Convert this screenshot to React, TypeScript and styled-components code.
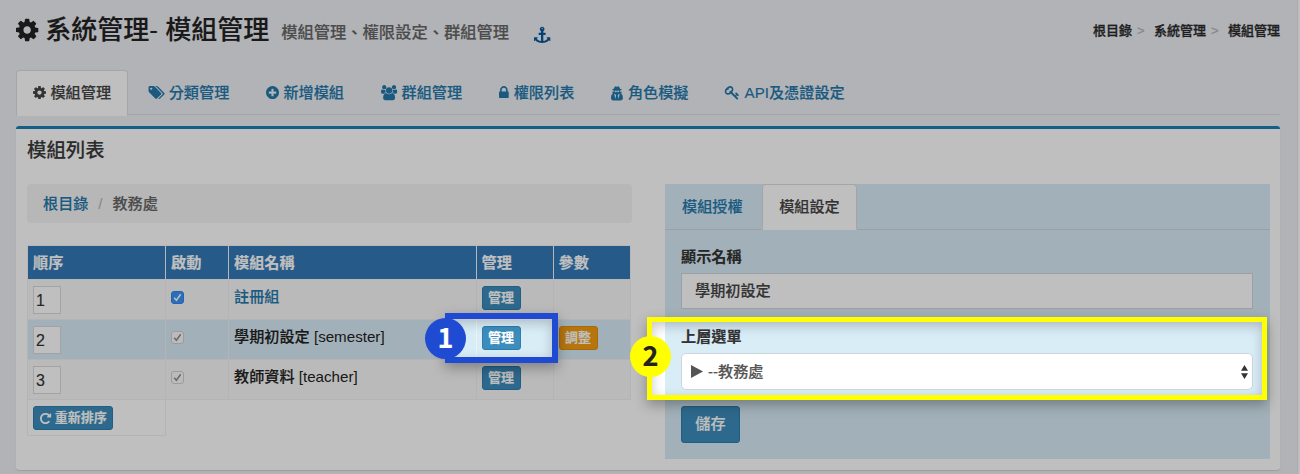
import React from 'react';
import styled, { createGlobalStyle, css } from 'styled-components';

const Global = createGlobalStyle`
  *, *::before, *::after { box-sizing: border-box; }
  html, body { margin: 0; padding: 0; }
  body {
    background: #fff;
    color: #333;
    font-family: "Liberation Sans", "Noto Sans CJK TC", sans-serif;
    font-size: 15.15px;
    font-weight: 500;
    line-height: 22px;
    -webkit-text-stroke: 0.15px currentColor;
    overflow: hidden;
  }
`;

const Page = styled.div`
  position: relative;
  width: 1300px;
  height: 474px;
  overflow: hidden;
`;

const Content = styled.div`
  width: 1298px;
  height: 474px;
  padding: 0 17px 0 16px;
  background: #eceff4;
  border-right: 1px solid #e4e6ea;
`;

const Header = styled.header`
  display: flex;
  justify-content: space-between;
  height: 70px;
`;

const Heading = styled.h1`
  display: flex;
  align-items: center;
  margin: 0;
  height: 60px;
  font-size: 26px;
  font-weight: 500;
  color: #222;
  white-space: pre;
`;

const HeadingText = styled.span`
  margin-left: 7px;
`;

const Subtitle = styled.small`
  margin: 4px 0 0 12px;
  font-size: 16.3px;
  color: #666;
`;

const AnchorLink = styled.a`
  display: flex;
  margin: 8px 0 0 25px;
  color: #07589c;
`;

const Trail = styled.nav`
  display: flex;
  align-items: center;
  height: 62px;
  font-size: 13px;
  color: #2a2a2a;
  -webkit-text-stroke-width: 0.3px;
`;

const TrailSeparator = styled.span`
  width: 22px;
  padding-left: 5px;
  font-size: 13px;
  color: #b5b8bc;
`;

const TabBar = styled.ul<{ $inset?: boolean }>`
  display: flex;
  list-style: none;
  margin: 0;
  padding: 0;
  height: ${p => (p.$inset ? 46 : 45)}px;
  border-bottom: 1px solid ${p => (p.$inset ? '#d2d4da' : '#dbdde1')};
`;

const Tab = styled.li<{ $active?: boolean }>`
  display: flex;
  align-items: center;
  height: 46px;
  margin-right: 2.6px;
  padding: 0 16px;
  border: 1px solid transparent;
  border-radius: 4px 4px 0 0;
  color: #2478ab;
  white-space: nowrap;
  svg { margin-right: 4.5px; }
  ${p =>
    p.$active &&
    css`
      background: #fff;
      color: #444;
      border-color: #dbdce0 #dbdce0 #fff;
    `}
`;

const Card = styled.section`
  display: flex;
  flex-direction: column;
  height: 344px;
  margin-top: 11px;
  padding: 0 10px 0 11px;
  background: #fff;
  border-top: 3px solid #1b7fb5;
  border-radius: 3px;
  box-shadow: 0 1px 1px rgba(0, 0, 0, 0.12);
`;

const CardTitle = styled.h3`
  margin: 0;
  height: 55px;
  font-size: 19.4px;
  font-weight: 500;
  line-height: 42px;
  color: #3a3a3a;
`;

const Columns = styled.div`
  display: flex;
  justify-content: space-between;
  align-items: flex-start;
`;

const LeftColumn = styled.div`
  width: 605px;
`;

const Crumbs = styled.nav`
  display: flex;
  align-items: center;
  height: 39px;
  margin-bottom: 22px;
  padding: 0 16px;
  background: #f5f5f5;
  border-radius: 4px;
  color: #666;
`;

const CrumbSlash = styled.span`
  width: 24px;
  text-align: center;
  color: #b8b8b8;
`;

const Link = styled.a`
  color: #2478ab;
`;

const Table = styled.table`
  width: 604px;
  table-layout: fixed;
  border-collapse: collapse;
`;

const HeadCell = styled.th`
  height: 34px;
  padding: 0 5px;
  border: 1px solid #f4f4f4;
  background: #3379b7;
  color: #fff;
  font-weight: 700;
  text-align: left;
`;

const Row = styled.tr<{ $tone: string }>`
  height: 40px;
  background: ${p => p.$tone};
`;

const Cell = styled.td`
  padding: 6px 5px 0;
  border: 1px solid #f1f1f1;
  vertical-align: top;
  color: #222;
`;

const EmptyCell = styled.td`
  padding: 0;
  border: 0;
`;

const ModuleCode = styled.span`
  -webkit-text-stroke: 0;
`;

const OrderInput = styled.input`
  display: block;
  width: 28px;
  height: 28px;
  margin: 0;
  padding: 2px 2px 0;
  border: 1px solid #dadada;
  background: #fff;
  color: #333;
  font: 500 16px "Liberation Sans", sans-serif;
`;

const CheckMark = styled.span<{ $on?: boolean }>`
  display: flex;
  width: 13px;
  height: 13px;
  margin-top: 5px;
  border: 1px solid ${p => (p.$on ? '#2f86ee' : '#d0d0d0')};
  border-radius: 3px;
  background: ${p => (p.$on ? '#3b93f7' : '#fafafa')};
  color: ${p => (p.$on ? '#fff' : '#8c8c8c')};
`;

const Button = styled.button<{ $tone?: 'warning'; $large?: boolean }>`
  display: flex;
  align-items: center;
  justify-content: center;
  gap: 4px;
  height: ${p => (p.$large ? 37 : 24)}px;
  padding: ${p => (p.$large ? '0 13.3px 1px' : '0 5.5px')};
  border: 1px solid ${p => (p.$tone ? '#e08e0b' : '#2b7eae')};
  border-radius: 3px;
  background: ${p => (p.$tone ? '#f39c12' : '#3c8dbc')};
  color: #fff;
  font-family: inherit;
  font-size: ${p => (p.$large ? 15.15 : 13)}px;
  font-weight: ${p => (p.$large ? 500 : 700)};
  line-height: 20px;
  white-space: nowrap;
  -webkit-text-stroke: inherit;
`;

const Panel = styled.div`
  width: 605px;
  height: 275px;
  background: #d9edf7;
`;

const Form = styled.div`
  display: flex;
  flex-direction: column;
  align-items: flex-start;
  padding: 16px 17px 0 16px;
`;

const Label = styled.label`
  height: 27px;
  font-weight: 700;
  color: #333;
`;

const TextInput = styled.input`
  width: 572px;
  height: 36px;
  margin-bottom: 17px;
  padding: 0 13px 4px;
  border: 1px solid #d0d4da;
  background: #fff;
  color: #444;
  font: inherit;
  -webkit-text-stroke: inherit;
`;

const Select = styled.div`
  display: flex;
  align-items: center;
  justify-content: space-between;
  width: 572px;
  height: 37px;
  margin-bottom: 16px;
  padding: 0 4px 0 9px;
  border: 1px solid #cdd5e0;
  border-radius: 5px;
  background: #fff;
  color: #555;
`;

const SelectValue = styled.span`
  display: flex;
  align-items: center;
  gap: 5px;
`;

const Dimmer = styled.div`
  position: absolute;
  inset: 0;
  background: rgba(0, 0, 0, 0.25);
  clip-path: path(evenodd, "M0 0H1300V474H0Z M446 314H557V362H446Z M648 318H1266V399H648Z");
  pointer-events: none;
`;

const Callout = styled.div<{ $x: number; $y: number; $w: number; $h: number; $color: string; $line: number }>`
  position: absolute;
  left: ${p => p.$x}px;
  top: ${p => p.$y}px;
  width: ${p => p.$w}px;
  height: ${p => p.$h}px;
  border: ${p => p.$line}px solid ${p => p.$color};
  box-shadow: 0 5px 12px rgba(0, 0, 0, 0.3), inset 0 4px 12px rgba(0, 0, 0, 0.22);
`;

const Marker = styled.span<{ $x: number; $y: number; $color: string; $ink: string }>`
  position: absolute;
  left: ${p => p.$x}px;
  top: ${p => p.$y}px;
  display: flex;
  align-items: center;
  justify-content: center;
  width: 41px;
  height: 41px;
  padding-bottom: 3px;
  border-radius: 50%;
  background: ${p => p.$color};
  color: ${p => p.$ink};
  font: 700 27px/38px "Noto Sans CJK TC", sans-serif;
`;

const GLYPHS = {
  cog: {
    w: 1792,
    d: 'M1152 896q0-106-75-181t-181-75-181 75-75 181 75 181 181 75 181-75 75-181zm512-109v222q0 12-8 23t-20 13l-185 28q-19 54-39 91 35 50 107 138 10 12 10 25t-9 23q-27 37-99 108t-94 71q-12 0-26-9l-138-108q-44 23-91 38-16 136-29 186-7 28-36 28h-222q-14 0-24.5-8.5t-11.5-21.5l-28-184q-49-16-90-37l-141 107q-10 9-25 9-14 0-25-11-126-114-165-168-7-10-7-23 0-12 8-23 15-21 51-66.5t54-70.5q-27-50-41-99l-183-27q-13-2-21-12.5t-8-23.5v-222q0-12 8-23t19-13l186-28q14-46 39-92-40-57-107-138-10-12-10-24 0-10 9-23 26-36 98.5-107.5t94.5-71.5q13 0 26 10l138 107q44-23 91-38 16-136 29-186 7-28 36-28h222q14 0 24.5 8.5t11.5 21.5l28 184q49 16 90 37l142-107q9-9 24-9 13 0 25 10 129 119 165 170 7 8 7 22 0 12-8 23-15 21-51 66.5t-54 70.5q26 50 41 98l183 28q13 2 21 12.5t8 23.5z',
  },
  tags: {
    w: 2048,
    d: 'M576 448q0-53-37.5-90.5t-90.5-37.5-90.5 37.5-37.5 90.5 37.5 90.5 90.5 37.5 90.5-37.5 37.5-90.5zm1067 576q0 53-37 90l-491 492q-39 37-91 37-53 0-90-37l-715-716q-38-37-64.5-101t-26.5-117v-416q0-52 38-90t90-38h416q53 0 117 26.5t102 64.5l715 714q37 39 37 91zm384 0q0 53-37 90l-491 492q-39 37-91 37-36 0-59-14t-53-45l470-470q37-37 37-90 0-52-37-91l-715-714q-38-38-102-64.5t-117-26.5h224q53 0 117 26.5t102 64.5l715 714q37 39 37 91z',
  },
  plus: {
    w: 1792,
    d: 'M1344 960v-128q0-26-19-45t-45-19h-256v-256q0-26-19-45t-45-19h-128q-26 0-45 19t-19 45v256h-256q-26 0-45 19t-19 45v128q0 26 19 45t45 19h256v256q0 26 19 45t45 19h128q26 0 45-19t19-45v-256h256q26 0 45-19t19-45zm320-64q0 209-103 385.5t-279.5 279.5-385.5 103-385.5-103-279.5-279.5-103-385.5 103-385.5 279.5-279.5 385.5-103 385.5 103 279.5 279.5 103 385.5z',
  },
  users: {
    w: 1984,
    d: 'M657 896q-162 5-265 128h-134q-82 0-138-40.5t-56-118.5q0-353 124-353 6 0 43.5 21t97.5 42.5 119 21.5q67 0 133-23-5 37-5 66 0 139 81 256zm1071 637q0 120-73 189.5t-194 69.5h-874q-121 0-194-69.5t-73-189.5q0-53 3.5-103.5t14-109 26.5-108.5 43-97.5 62-81 85.5-53.5 111.5-20q10 0 43 21.5t73 48 107 48 135 21.5 135-21.5 107-48 73-48 43-21.5q61 0 111.5 20t85.5 53.5 62 81 43 97.5 26.5 108.5 14 109 3.5 103.5zm-1024-1277q0 106-75 181t-181 75-181-75-75-181 75-181 181-75 181 75 75 181zm704 384q0 159-112.5 271.5t-271.5 112.5-271.5-112.5-112.5-271.5 112.5-271.5 271.5-112.5 271.5 112.5 112.5 271.5zm576 225q0 78-56 118.5t-138 40.5h-134q-103-123-265-128 81-117 81-256 0-29-5-66 66 23 133 23 59 0 119-21.5t97.5-42.5 43.5-21q124 0 124 353zm-128-609q0 106-75 181t-181 75-181-75-75-181 75-181 181-75 181 75 75 181z',
  },
  lock: {
    w: 1792,
    d: 'M640 768h512v-192q0-106-75-181t-181-75-181 75-75 181v192zm832 96v576q0 40-28 68t-68 28h-960q-40 0-68-28t-28-68v-576q0-40 28-68t68-28h32v-192q0-184 132-316t316-132 316 132 132 316v192h32q40 0 68 28t28 68z',
  },
  secret: {
    w: 2048,
    d: 'M832 1664l96-448-96-128-128-64zm384 0l128-640-128 64-96 128zm96-979q-2-4-4-6-10-8-96-8-70 0-167 19-7 2-21 2t-21-2q-97-19-167-19-86 0-96 8-2 2-4 6 2 18 4 27 2 3 7.5 6.5t7.5 10.5q2 4 7.5 20.5t7 20.5 7.5 17 8.5 17 9 14 12 13.5 14 9.5 17.5 8 20.5 4 24.5 2q36 0 59-12.5t32.5-30 14.5-34.5 11.5-29.5 17.5-12.5h12q11 0 17.5 12.5t11.5 29.5 14.5 34.5 32.5 30 59 12.5q13 0 24.5-2t20.5-4 17.5-8 14-9.5 12-13.5 9-14 8.5-17 7.5-17 7-20.5 7.5-20.5q2-7 7.5-10.5t7.5-6.5q2-9 4-27zm416 879q0 121-73 190t-194 69h-874q-121 0-194-69t-73-190q0-61 4.5-118t19-125.5 37.5-123.5 63.5-103.5 93.5-74.5l-90-220h214q-22-64-22-128 0-12 2-32-194-40-194-96 0-57 210-99 17-62 51.5-134t70.5-114q32-37 76-37 30 0 84 31t84 31 84-31 84-31q44 0 76 37 36 42 70.5 114t51.5 134q210 42 210 99 0 56-194 96 7 81-20 160h214l-82 225q63 33 107.5 96.5t65.5 143.5 29 151.5 8 157.5z',
  },
  key: {
    w: 1792,
    d: 'M832 512q0-80-56-136t-136-56-136 56-56 136q0 42 19 83-41-19-83-19-80 0-136 56t-56 136 56 136 136 56 136-56 56-136q0-42-19-83 41 19 83 19 80 0 136-56t56-136zm851 704q0 17-49 66t-66 49q-9 0-28.5-16t-36.5-33-38.5-40-24.5-26l-96 96 220 220q28 28 28 68 0 42-39 81t-81 39q-40 0-68-28l-671-671q-176 131-365 131-163 0-265.5-102.5t-102.5-265.5q0-160 95-313t248-248 313-95q163 0 265.5 102.5t102.5 265.5q0 189-131 365l355 355 96-96q-3-3-26-24.5t-40-38.5-33-36.5-16-28.5q0-17 49-66t66-49q13 0 23 10 6 6 46 44.5t82 79.5 86.5 86 73 78 28.5 41z',
  },
  anchor: {
    w: 1792,
    d: 'M960 256q0-26-19-45t-45-19-45 19-19 45 19 45 45 19 45-19 19-45zm832 1024v352q0 22-20 30-8 2-12 2-12 0-23-9l-93-93q-119 143-318.5 226.5t-429.5 83.5-429.5-83.5-318.5-226.5l-93 93q-9 9-23 9-4 0-12-2-20-8-20-30v-352q0-14 9-23t23-9h352q22 0 30 20 8 19-7 35l-100 100q67 91 189.5 153.5t271.5 82.5v-647h-192q-26 0-45-19t-19-45v-128q0-26 19-45t45-19h192v-163q-58-34-93-92.5t-35-128.5q0-106 75-181t181-75 181 75 75 181q0 70-35 128.5t-93 92.5v163h192q26 0 45 19t19 45v128q0 26-19 45t-45 19h-192v647q149-20 271.5-82.5t189.5-153.5l-100-100q-15-16-7-35 8-20 30-20h352q14 0 23 9t9 23z',
  },
  repeat: {
    w: 1792,
    d: 'M1664 256v448q0 26-19 45t-45 19h-448q-42 0-59-40-17-39 14-69l138-138q-148-137-349-137-104 0-198.5 40.5t-163.5 109.5-109.5 163.5-40.5 198.5 40.5 198.5 109.5 163.5 163.5 109.5 198.5 40.5q119 0 225-52t179-147q7-10 23-12 15 0 25 9l137 138q9 8 9.5 20.5t-7.5 22.5q-109 132-264 204.5t-327 72.5q-156 0-298-61t-245-164-164-245-61-298 61-298 164-245 245-164 298-61q147 0 284.5 55.5t244.5 156.5l130-129q29-31 70-14 39 17 39 59z',
  },
};

type GlyphName = keyof typeof GLYPHS;

/* crop trims the empty side bearing of a glyph: [left, width] in glyph units */
function Icon({ name, size, crop }: { name: GlyphName; size: number; crop?: [number, number] }) {
  const [x, w] = crop ?? [0, GLYPHS[name].w];
  return (
    <svg
      width={(size * w) / 1792}
      height={size}
      viewBox={`${x} 0 ${w} 1792`}
      fill="currentColor"
      overflow="visible"
      aria-hidden="true"
    >
      <path d={GLYPHS[name].d} />
    </svg>
  );
}

function Check({ on }: { on?: boolean }) {
  return (
    <CheckMark $on={on}>
      <svg width="11" height="11" viewBox="0 0 11 11" fill="none" stroke="currentColor" strokeWidth="1.5">
        <path d="M2.2 5.8L4.4 8.3L8.7 2.2" />
      </svg>
    </CheckMark>
  );
}

const TABS: { label: string; icon: React.ReactNode }[] = [
  { label: '模組管理', icon: <Icon name="cog" size={15.15} crop={[128, 1536]} /> },
  { label: '分類管理', icon: <Icon name="tags" size={15.15} crop={[64, 1964]} /> },
  { label: '新增模組', icon: <Icon name="plus" size={15.15} crop={[128, 1536]} /> },
  { label: '群組管理', icon: <Icon name="users" size={15.15} crop={[64, 1960]} /> },
  { label: '權限列表', icon: <Icon name="lock" size={15.15} crop={[320, 1240]} /> },
  { label: '角色模擬', icon: <Icon name="secret" size={15.15} crop={[320, 1480]} /> },
  { label: 'API及憑證設定', icon: <Icon name="key" size={15.15} crop={[32, 1780]} /> },
];

const ROWS = [
  { order: 1, name: '註冊組', tone: '#f9f9f9', link: true },
  { order: 2, name: '學期初設定', code: 'semester', tone: '#d9edf7', adjustable: true },
  { order: 3, name: '教師資料', code: 'teacher', tone: '#f9f9f9' },
];

const COLUMNS = [138, 63, 247.5, 77, 77.5];

export default function App() {
  return (
    <Page>
      <Global />
      <Content>
        <Header>
          <Heading>
            <Icon name="cog" size={26} crop={[128, 1536]} />
            <HeadingText>系統管理- 模組管理</HeadingText>
            <Subtitle>模組管理、權限設定、群組管理</Subtitle>
            <AnchorLink>
              <Icon name="anchor" size={16.3} />
            </AnchorLink>
          </Heading>
          <Trail>
            根目錄<TrailSeparator>&gt;</TrailSeparator>
            系統管理<TrailSeparator>&gt;</TrailSeparator>
            模組管理
          </Trail>
        </Header>

        <TabBar>
          {TABS.map((tab, i) => (
            <Tab key={tab.label} $active={i === 0}>
              {tab.icon}
              {tab.label}
            </Tab>
          ))}
        </TabBar>

        <Card>
          <CardTitle>模組列表</CardTitle>
          <Columns>
            <LeftColumn>
              <Crumbs>
                <Link>根目錄</Link>
                <CrumbSlash>/</CrumbSlash>
                教務處
              </Crumbs>
              <Table>
                <colgroup>
                  {COLUMNS.map((w, i) => (
                    <col key={i} style={{ width: w }} />
                  ))}
                </colgroup>
                <thead>
                  <tr>
                    {['順序', '啟動', '模組名稱', '管理', '參數'].map(h => (
                      <HeadCell key={h}>{h}</HeadCell>
                    ))}
                  </tr>
                </thead>
                <tbody>
                  {ROWS.map(row => (
                    <Row key={row.order} $tone={row.tone}>
                      <Cell>
                        <OrderInput defaultValue={row.order} />
                      </Cell>
                      <Cell>
                        <Check on={row.link} />
                      </Cell>
                      <Cell>
                        {row.link ? <Link>{row.name}</Link> : row.name}
                        {row.code && <ModuleCode> [{row.code}]</ModuleCode>}
                      </Cell>
                      <Cell>
                        <Button>管理</Button>
                      </Cell>
                      <Cell>{row.adjustable && <Button $tone="warning">調整</Button>}</Cell>
                    </Row>
                  ))}
                  <tr style={{ height: 36 }}>
                    <Cell>
                      <Button>
                        <Icon name="repeat" size={13} crop={[128, 1536]} />
                        重新排序
                      </Button>
                    </Cell>
                    <EmptyCell colSpan={4} />
                  </tr>
                </tbody>
              </Table>
            </LeftColumn>

            <Panel>
              <TabBar $inset>
                <Tab>模組授權</Tab>
                <Tab $active>模組設定</Tab>
              </TabBar>
              <Form>
                <Label>顯示名稱</Label>
                <TextInput defaultValue="學期初設定" />
                <Label>上層選單</Label>
                <Select>
                  <SelectValue>
                    <svg width="12" height="13" viewBox="0 0 12 13" fill="currentColor">
                      <path d="M0 0L12 6.5L0 13Z" />
                    </svg>
                    --教務處
                  </SelectValue>
                  <svg width="7" height="14" viewBox="0 0 7 14" fill="#333">
                    <path d="M3.5 0L7 5.8H0ZM3.5 14L7 8.2H0Z" />
                  </svg>
                </Select>
                <Button $large>儲存</Button>
              </Form>
            </Panel>
          </Columns>
        </Card>
      </Content>

      <Dimmer />
      <Callout $x={445} $y={313} $w={113} $h={50} $line={6} $color="#1f4bd2" />
      <Marker $x={425} $y={318} $color="#1f4bd2" $ink="#fff">
        1
      </Marker>
      <Callout $x={647} $y={317} $w={620} $h={83} $line={5} $color="#ffff00" />
      <Marker $x={630} $y={336} $color="#ffff00" $ink="#222">
        2
      </Marker>
    </Page>
  );
}
